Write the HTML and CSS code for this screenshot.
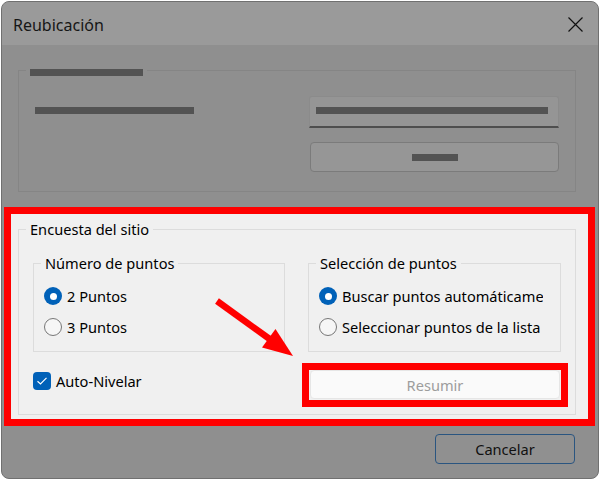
FILE: index.html
```html
<!DOCTYPE html>
<html lang="es">
<head>
<meta charset="utf-8">
<title>Reubicación</title>
<link rel="stylesheet" href="styles.css">
</head>
<body>
<div class="window">
  <div class="titlebar">
    <span class="title">Reubicación</span>
    <svg class="close" width="15" height="15" viewBox="0 0 15 15"><path d="M0.5 0.5 L14.5 14.5 M14.5 0.5 L0.5 14.5" stroke="#111" stroke-width="1.2" fill="none"/></svg>
  </div>
  <div class="content">
    <div class="group dim">
      <div class="dim-title"><span class="bar bar-title"></span></div>
      <div class="dim-grid">
        <span class="bar bar-label"></span>
        <div class="textbox"><span class="bar bar-text"></span></div>
        <div class="dim-btn"><span class="bar bar-btn"></span></div>
      </div>
    </div>

    <div class="highlight">
      <div class="group survey">
        <div class="group-title">Encuesta del sitio</div>
        <div class="cols">
          <div class="group sub">
            <div class="group-title">Número de puntos</div>
            <div class="options">
              <div class="option"><span class="radio checked"></span><span class="opt-text">2 Puntos</span></div>
              <div class="option"><span class="radio"></span><span class="opt-text">3 Puntos</span></div>
            </div>
          </div>
          <div class="group sub sub-right">
            <div class="group-title">Selección de puntos</div>
            <div class="options">
              <div class="option clip"><span class="radio checked"></span><span class="opt-text">Buscar puntos automáticamente</span></div>
              <div class="option clip"><span class="radio"></span><span class="opt-text">Seleccionar puntos de la lista</span></div>
            </div>
          </div>
        </div>
        <div class="bottom-row">
          <div class="check">
            <span class="box"><svg width="12" height="10" viewBox="0 0 12 10"><path d="M1.5 5.2 L4.5 8 L10.5 1.8" stroke="#fff" stroke-width="1.2" fill="none"/></svg></span>
            <span class="check-text">Auto-Nivelar</span>
          </div>
          <div class="mark">
            <div class="resumir">Resumir</div>
          </div>
        </div>
      </div>
    </div>

    <div class="footer">
      <div class="cancel">Cancelar</div>
    </div>
  </div>
  <svg class="arrow" width="596" height="476" viewBox="2 2 596 476">
    <line x1="217" y1="301" x2="271" y2="340" stroke="#ff0000" stroke-width="6.5"/>
    <polygon points="293,356 262,347.5 275.5,329" fill="#ff0000"/>
  </svg>
</div>
</body>
</html>
```

FILE: styles.css
```css
* { box-sizing: border-box; }

html, body {
  margin: 0;
  padding: 0;
  background: #ffffff;
}

body {
  font-family: "Noto Sans", "Open Sans", sans-serif;
  font-size: 14.6px;
  color: #000;
}

.window {
  position: relative;
  margin: 1px 0 0 1px;
  width: 598px;
  height: 478px;
  border: 1px solid #707070;
  border-radius: 8px;
  background: #8f8f8f;
  overflow: hidden;
}

.titlebar {
  height: 43px;
  background: #9a9a9a;
  display: flex;
  align-items: center;
  justify-content: space-between;
  padding: 0 15px 0 11px;
}

.title {
  font-size: 16px;
  color: #161616;
  line-height: 20px;
  margin-top: 2px;
}

.close {
  display: block;
  margin-top: 2px;
}

.content {
  display: flex;
  flex-direction: column;
}

.group {
  border: 1px solid #dcdcdc;
}

/* dimmed upper group */
.dim {
  margin: 25px 0 0 16px;
  width: 558px;
  border-color: #858585;
  padding: 0 16px 19px 16px;
}

.dim-title {
  margin: -2px 0 0 -9px;
  padding: 0 4px;
  background: #8f8f8f;
  width: fit-content;
  height: 7px;
}

.bar {
  display: block;
  height: 7px;
  background: #535353;
}

.bar-title { width: 113px; }
.bar-label { width: 159px; margin-top: 11px; }
.bar-text { width: 232px; }
.bar-btn { width: 46px; }

.dim-grid {
  margin-top: 20px;
  display: grid;
  grid-template-columns: 1fr 250px;
  row-gap: 14px;
}

.textbox {
  height: 32px;
  background: #959595;
  border: 1px solid #8b8b8b;
  border-bottom: 2px solid #4e4e4e;
  border-radius: 3px 3px 0 0;
  padding: 10px 0 0 6px;
}

.dim-btn {
  grid-column: 2;
  margin-left: 1px;
  width: 249px;
  height: 30px;
  border: 1px solid #7b7b7b;
  border-radius: 4px;
  background: #969696;
  display: flex;
  align-items: center;
  justify-content: center;
}

/* highlighted area */
.highlight {
  margin: 15px 0 0 2px;
  width: 591px;
  height: 219px;
  border: 7px solid #ff0000;
  background: #f0f0f0;
  padding: 15px 12px 4px 7px;
}

.group-title {
  width: fit-content;
  margin: -11px 0 0 7px;
  padding: 0 4px;
  line-height: 20px;
  height: 20px;
  background: #f0f0f0;
  white-space: nowrap;
}

.survey {
  width: 558px;
  height: 186px;
}

.cols {
  margin-top: 24px;
  padding: 0 14px;
  display: flex;
  gap: 23px;
}

.sub {
  width: 252px;
  height: 89px;
  padding: 0 0 0 10px;
}

.sub .group-title {
  margin-left: -3px;
}

.sub-right {
  width: 253px;
}

.options {
  margin-top: 12px;
  display: flex;
  flex-direction: column;
  gap: 9px;
}

.option {
  display: flex;
  align-items: center;
  height: 22px;
  gap: 5px;
  white-space: nowrap;
  line-height: 20px;
}

.option.clip {
  width: 224px;
  overflow: hidden;
}

.radio {
  flex: none;
  width: 18px;
  height: 18px;
  border-radius: 50%;
  border: 1px solid #777;
  background: #f6f6f6;
  position: relative;
}

.radio.checked {
  border: none;
  background: #0061b8;
}

.radio.checked::after {
  content: "";
  position: absolute;
  left: 5.5px;
  top: 5.5px;
  width: 7px;
  height: 7px;
  border-radius: 50%;
  background: #fff;
}

.bottom-row {
  margin-top: 11px;
  padding: 0 7px 0 14px;
  display: flex;
  justify-content: space-between;
  align-items: flex-start;
}

.check {
  margin-top: 8px;
  display: flex;
  align-items: center;
  gap: 5px;
  height: 20px;
  line-height: 20px;
}

.box {
  width: 18px;
  height: 18px;
  border-radius: 4px;
  background: #0061b8;
  display: flex;
  align-items: center;
  justify-content: center;
}

.box svg { display: block; }

.mark {
  width: 266px;
  height: 44px;
  border: 7px solid #ff0000;
  padding: 0 1px 1px 1px;
}

.resumir {
  width: 250px;
  height: 29px;
  background: #fafafa;
  border: 1px solid #e6e6e6;
  border-radius: 4px;
  color: #9d9d9d;
  display: flex;
  align-items: center;
  justify-content: center;
  line-height: 20px;
}

.footer {
  margin: 8px 0 0 433px;
}

.cancel {
  width: 140px;
  height: 30px;
  border: 1px solid #2a5580;
  border-radius: 4px;
  background: #909090;
  color: #111;
  display: flex;
  align-items: center;
  justify-content: center;
  line-height: 20px;
}

.arrow {
  position: absolute;
  left: 0;
  top: 0;
  pointer-events: none;
}
```
